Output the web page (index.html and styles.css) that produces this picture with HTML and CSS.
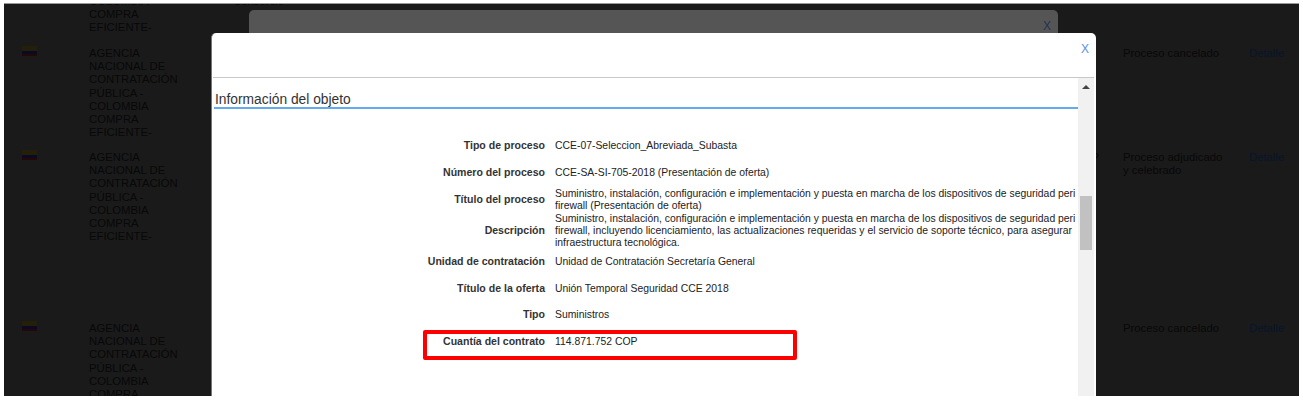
FILE: index.html
```html
<!DOCTYPE html>
<html lang="es">
  <head>
  	<meta charset="utf-8">
  	<title>Información del objeto</title>
  	<link rel="stylesheet" href="styles.css">
  </head>
<body>

	<div class="frame">
		<div class="list">
			<div class="row first">
				<div class="entity">COLOMBIA<br>COMPRA<br>EFICIENTE-</div>
				<div class="kind">Consorcio</div>
			</div>
			<div class="row second">
				<div class="flag"><i class="yellow"></i><i class="blue"></i><i class="red"></i></div>
				<div class="entity">AGENCIA NACIONAL DE CONTRATACIÓN PÚBLICA - COLOMBIA COMPRA EFICIENTE-</div>
				<div class="amount"></div>
				<div class="state">Proceso cancelado</div>
				<a class="detail">Detalle</a>
			</div>
			<div class="row third">
				<div class="flag"><i class="yellow"></i><i class="blue"></i><i class="red"></i></div>
				<div class="entity">AGENCIA NACIONAL DE CONTRATACIÓN PÚBLICA - COLOMBIA COMPRA EFICIENTE-</div>
				<div class="amount">COP</div>
				<div class="state">Proceso adjudicado y celebrado</div>
				<a class="detail">Detalle</a>
			</div>
			<div class="row">
				<div class="flag"><i class="yellow"></i><i class="blue"></i><i class="red"></i></div>
				<div class="entity">AGENCIA NACIONAL DE CONTRATACIÓN PÚBLICA - COLOMBIA COMPRA EFICIENTE-</div>
				<div class="amount"></div>
				<div class="state">Proceso cancelado</div>
				<a class="detail">Detalle</a>
			</div>
		</div>

		<div class="modal-back"><a class="close">X</a></div>

		<div class="modal">
			<div class="modal-head"><a class="close">X</a></div>
			<div class="modal-body">
				<div class="content">
					<h2 class="title">Información del objeto</h2>
					<div class="fields">
						<div class="name">Tipo de proceso</div>
						<div class="value">CCE-07-Seleccion_Abreviada_Subasta</div>
						<div class="name">Número del proceso</div>
						<div class="value">CCE-SA-SI-705-2018 (Presentación de oferta)</div>
						<div class="name">Título del proceso</div>
						<div class="value">Suministro, instalación, configuración e implementación y puesta en marcha de los dispositivos de seguridad perimetral tipo<br>firewall (Presentación de oferta)</div>
						<div class="name">Descripción</div>
						<div class="value">Suministro, instalación, configuración e implementación y puesta en marcha de los dispositivos de seguridad perimetral tipo<br>firewall, incluyendo licenciamiento, las actualizaciones requeridas y el servicio de soporte técnico, para asegurar la continuidad de la<br>infraestructura tecnológica.</div>
						<div class="name">Unidad de contratación</div>
						<div class="value">Unidad de Contratación Secretaría General</div>
						<div class="name">Título de la oferta</div>
						<div class="value">Unión Temporal Seguridad CCE 2018</div>
						<div class="name">Tipo</div>
						<div class="value">Suministros</div>
						<div class="name">Cuantía del contrato</div>
						<div class="value">114.871.752 COP</div>
					</div>
				</div>
				<div class="scrollbar">
					<div class="arrow"></div>
					<div class="thumb"></div>
				</div>
			</div>
		</div>

		<div class="mark"></div>
	</div>

</body>
</html>
```

FILE: styles.css
```css
html, body { height: 100%; }
body { margin: 0;padding: 3px 4px 5px;box-sizing: border-box;background: #fff;font-family: "Liberation Sans", Arial, sans-serif;overflow: hidden; }

/* fondo oscurecido */
.frame { position: relative;height: 393px;background: #1a1a1a;border-top: 1px solid #999;box-sizing: border-box;overflow: hidden; }
.list { margin-top: -9px;font-size: 11.3px;line-height: 13.2px;color: #080808; }
.row { display: flex;height: 104px; }
.row.first { height: 52px; }
.row.third { height: 171px; }
.flag { width: 15px;height: 10px;margin: -1px 52px 0 18px;flex: none;display: flex;flex-direction: column; }
.flag i { display: block;flex: 1; }
.flag .yellow { flex: 2;background: #241f08; }
.flag .blue { background: #0a0a24; }
.flag .red { background: #240808; }
.entity { width: 94px;flex: none; }
.row.first .entity { margin-left: 85px; }
.kind { margin-left: 50px; }
.amount { width: 916px;flex: none;text-align: right; }
.state { width: 104px;margin: 0 8px 0 24px;flex: none; }
.detail { margin-left: 14px;color: #08152a; }

/* ventana de atras */
.modal-back { position: absolute;left: 245px;top: 6px;width: 809px;height: 60px;background: #555;border-radius: 5px; }
.modal-back .close { position: absolute;right: 7px;top: 9px;color: #26324f;font-size: 12px; }

/* ventana de adelante */
.modal { position: absolute;left: 207px;top: 29px;width: 885px;height: 370px;background: #fff;border-radius: 5px 5px 0 0;padding: 0 2px 0 1px;box-sizing: border-box;border-left: 1px solid #777;display: flex;flex-direction: column; }
.modal-head { height: 44px;flex: none;border-bottom: 1px solid #c8c8c8;text-align: right; }
.modal-head .close { display: inline-block;margin: 9px 5px 0 0;color: #5b8fe8;font-size: 12px; }
.modal-body { flex: 1;display: flex;min-height: 0; }
.content { flex: 1;min-width: 0;overflow: hidden; }
.title { margin: 14px 0 23.6px 1px;padding-left: 1px;font-size: 13.8px;font-weight: normal;line-height: 15px;color: #333;border-bottom: 2px solid #66aaee; }
.fields { display: grid;grid-template-columns: 332px minmax(0, 1fr);grid-auto-rows: minmax(26.8px, auto);column-gap: 10px;align-items: center;margin-right: 3px;overflow: hidden;font-size: 10.4px;line-height: 11.8px;color: #222; }
.name { text-align: right;font-size: 10.55px;font-weight: bold;color: #333; }
.value { white-space: nowrap; }

.scrollbar { width: 16px;flex: none;background: #f1f1f1;padding-top: 7px;box-sizing: border-box; }
.arrow { width: 0;height: 0;margin: 0 auto;border: 4px solid transparent;border-top: 0;border-bottom: 4px solid #444; }
.thumb { width: 12px;height: 54px;margin: 107px auto 0;background: #c1c1c1; }

/* recuadro rojo */
.mark { position: absolute;left: 419px;top: 326px;width: 374px;height: 30px;border: 4px solid #f00;border-radius: 2px;box-sizing: border-box; }
```
